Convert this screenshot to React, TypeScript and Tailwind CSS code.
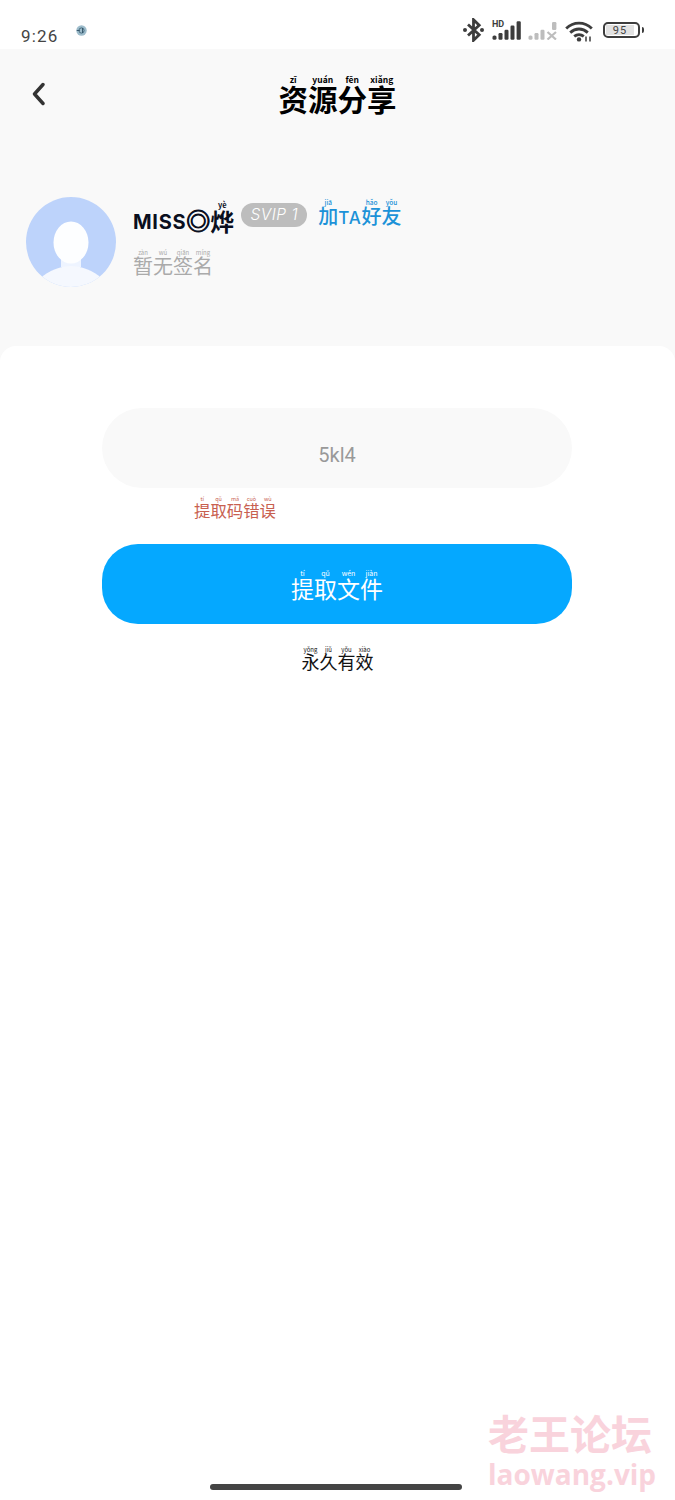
import React from "react";

const CJK = "font-['Noto_Sans_CJK_SC','Noto_Sans',sans-serif]";

function R({ c, p, className = "" }: { c: string; p: string; className?: string }) {
  return (
    <ruby className={className}>
      {c}
      <rt>{p}</rt>
    </ruby>
  );
}

function Globe() {
  return (
    <svg width="11" height="11" viewBox="0 0 11 11" className="mt-[25px] ml-[17px]">
      <circle cx="5.5" cy="5.5" r="5.2" fill="#9dbccb" />
      <circle cx="5.5" cy="5.5" r="2.6" fill="none" stroke="#3f6478" strokeWidth="0.9" />
      <path d="M0.8 5.5h3M6.5 3v5" stroke="#2f5064" strokeWidth="0.9" />
    </svg>
  );
}

function Bluetooth() {
  return (
    <svg width="21" height="24" viewBox="0 0 21 24" fill="none">
      <path d="M5 6.5l11.2 10.3-5.7 5.5V1.7l5.7 5.5L5 17.5" stroke="#3d3d3d" strokeWidth="2.8" />
      <circle cx="2" cy="12" r="2" fill="#3d3d3d" />
      <circle cx="19" cy="12" r="2" fill="#3d3d3d" />
    </svg>
  );
}

function Signal({ muted }: { muted?: boolean }) {
  const col = muted ? "#bdbdbd" : "#3d3d3d";
  return (
    <svg width="29" height="19" viewBox="0 0 29 19" fill={col}>
      <rect x="0.5" y="14.5" width="4" height="4.3" rx="1.6" />
      <rect x="6.5" y="12" width="4" height="6.8" rx="1.2" />
      <rect x="12.5" y="8.8" width="4" height="10" rx="1.2" />
      {muted ? (
        <>
          <rect x="24" y="1" width="4.4" height="8" rx="1.2" />
          <path d="M19.5 11l8.5 7.5M28 11l-8.5 7.5" stroke={col} strokeWidth="2.2" />
        </>
      ) : (
        <>
          <rect x="18.5" y="4.5" width="4" height="14.3" rx="1.2" />
          <rect x="24.6" y="0.2" width="4.2" height="18.6" rx="1.2" />
        </>
      )}
    </svg>
  );
}

function Wifi() {
  return (
    <svg width="28" height="21" viewBox="0 0 28 21" fill="none" stroke="#3d3d3d" strokeWidth="2.8">
      <path d="M1.2 7.5C8.5 0.3 19.5 0.3 26.8 7.5" />
      <path d="M5.2 11.6C10.5 6.8 17.5 6.8 22.8 11.6" />
      <path d="M9.2 15.4C12 13.2 16 13.2 18.8 15.4" />
      <circle cx="14" cy="18.4" r="2.2" fill="#3d3d3d" stroke="none" />
      <path d="M21 15.5v5M25 15.5v5" strokeWidth="1.5" />
    </svg>
  );
}

function Avatar() {
  return (
    <svg width="90" height="90" viewBox="0 0 90 90" className="shrink-0">
      <defs>
        <clipPath id="avatar-clip">
          <circle cx="45" cy="45" r="45" />
        </clipPath>
      </defs>
      <circle cx="45" cy="45" r="45" fill="#bdd3fb" />
      <g clipPath="url(#avatar-clip)">
        <path d="M35 58h20v12H35z" fill="#eef4ff" />
        <path d="M14 82c8-9 22-13 31-13s23 4 31 13c-8 8-19 9-31 9s-23-1-31-9z" fill="#f5f8fe" />
        <ellipse cx="45" cy="45.5" rx="17.5" ry="21" fill="#fdfeff" />
      </g>
    </svg>
  );
}

export default function App() {
  return (
    <div className={`relative min-h-[1500px] w-[675px] overflow-hidden bg-white ${CJK} [&_rt]:leading-none`}>
      {/* status bar */}
      <div className="flex h-[49px] items-start bg-white">
        <span className="mt-[26px] ml-[21px] font-['Roboto',sans-serif] text-[17px] leading-[20px] tracking-[1.2px] text-[#444]">
          9:26
        </span>
        <Globe />
        <div className="ml-auto mt-[18px] mr-[31px] flex items-start">
          <Bluetooth />
          <div className="relative ml-[8px] mt-[3px]">
            <Signal />
            <span className="absolute -top-[2px] left-0 font-['Roboto',sans-serif] text-[9px] font-bold leading-[10px] text-[#3d3d3d]">
              HD
            </span>
          </div>
          <div className="ml-[7px] mt-[3px]">
            <Signal muted />
          </div>
          <div className="ml-[8px] mt-[3px]">
            <Wifi />
          </div>
          <div className="ml-[10px] mt-[4px] flex items-center">
            <div className="flex h-[16px] w-[37px] items-center rounded-[5px] border-2 border-[#3d3d3d] p-[1px]">
              <div className="flex h-full w-[28px] items-end justify-center bg-[#e2e2e2] font-['Roboto',sans-serif] text-[11px] leading-[9px] tracking-[1px] text-[#444]">
                95
              </div>
            </div>
            <div className="ml-[2px] h-[6px] w-[2px] rounded-r-sm bg-[#3d3d3d]" />
          </div>
        </div>
      </div>

      {/* header + profile */}
      <div className="flex h-[313px] flex-col bg-[#f9f9f9]">
        <div className="relative flex h-[80px] items-center justify-center">
          <svg width="14" height="24" viewBox="0 0 14 24" fill="none" className="absolute left-[31px] top-[33px]">
            <path d="M12 2.5L3.5 12l8.5 9.5" stroke="#333" strokeWidth="3.4" strokeLinecap="round" strokeLinejoin="round" />
          </svg>
          <h1 className="mt-[14px] text-[29.5px] font-bold leading-[38px] text-black [&_rt]:text-[8.5px] [&_rt]:font-bold">
            <R c="资" p="zī" />
            <R c="源" p="yuán" />
            <R c="分" p="fēn" />
            <R c="享" p="xiǎng" />
          </h1>
        </div>
        <div className="mt-[68px] flex items-start gap-[17px] pl-[26px]">
          <Avatar />
          <div className="flex flex-col">
            <div className="flex h-[44px] items-center">
              <span className="text-[24px] font-bold leading-[30px] text-[#0a0f1e] [&_rt]:text-[7.5px]">
                <span className="align-[2px] font-['Inter',sans-serif] text-[20px] tracking-[0.7px]">MISS</span>
                <span className="align-[1px] [-webkit-text-stroke:1px_#0a0f1e]">◎</span>
                <R c="烨" p="yè" />
              </span>
              <span className="ml-[7px] -mt-[8px] flex h-[24px] w-[66px] items-center justify-center rounded-full bg-[#bdbdbd] font-['Inter',sans-serif] text-[15.5px] font-light italic leading-none tracking-[0.5px] text-white">
                SVIP 1
              </span>
              <span className="ml-[11px] -mt-[7px] text-[20px] font-medium leading-[28px] text-[#1c92d8] [&_rt]:text-[6.5px]">
                <R c="加" p="jiā" />
                <span className="font-['Inter',sans-serif] text-[17px] tracking-[0.8px]">TA</span>
                <R c="好" p="hǎo" />
                <R c="友" p="yǒu" />
              </span>
            </div>
            <span className="mt-[8px] text-[20px] leading-[26px] text-[#aaaaaa] [&_rt]:text-[6px] [&_rt]:font-normal">
              <R c="暂" p="zàn" />
              <R c="无" p="wú" />
              <R c="签" p="qiān" />
              <R c="名" p="míng" />
            </span>
          </div>
        </div>
      </div>

      {/* card */}
      <div className="relative -mt-[16px] rounded-t-[16px] bg-white px-[102px] pt-[62px]">
        <div className="flex h-[80px] w-[470px] items-center justify-center rounded-[40px] bg-[#f9f9f9] pt-[13px]">
          <span className="font-['Roboto',sans-serif] text-[20px] leading-[26px] text-[#999]">5kl4</span>
        </div>
        <div className="mt-[8px] h-[48px] pl-[92px] text-[16.4px] leading-[24px] text-[#c8604f] [&_rt]:text-[5.5px]">
          <R c="提" p="tí" />
          <R c="取" p="qǔ" />
          <R c="码" p="mǎ" />
          <R c="错" p="cuò" />
          <R c="误" p="wù" />
        </div>
        <button className="flex h-[80px] w-[470px] items-center justify-center rounded-[36px] bg-[#05a8ff] text-[23px] leading-[30px] text-white [&_rt]:text-[7px]">
          <span className="mt-[4px]">
            <R c="提" p="tí" />
            <R c="取" p="qǔ" />
            <R c="文" p="wén" />
            <R c="件" p="jiàn" />
          </span>
        </button>
        <div className="mt-[22px] text-center text-[18px] leading-[26px] text-[#111] [&_rt]:text-[6px]">
          <R c="永" p="yǒng" />
          <R c="久" p="jiǔ" />
          <R c="有" p="yǒu" />
          <R c="效" p="xiào" />
        </div>
      </div>

      {/* watermark */}
      <div className="absolute left-[488px] top-[1406px] flex flex-col font-bold text-[#f9d3dc]">
        <span className="text-[41px] leading-[52px]">老王论坛</span>
        <span className="font-['Open_Sans',sans-serif] text-[28px] leading-[33px]">laowang.vip</span>
      </div>

      {/* home indicator */}
      <div className="absolute left-[210px] top-[1484px] h-[6px] w-[252px] rounded-full bg-[#444]" />
    </div>
  );
}
